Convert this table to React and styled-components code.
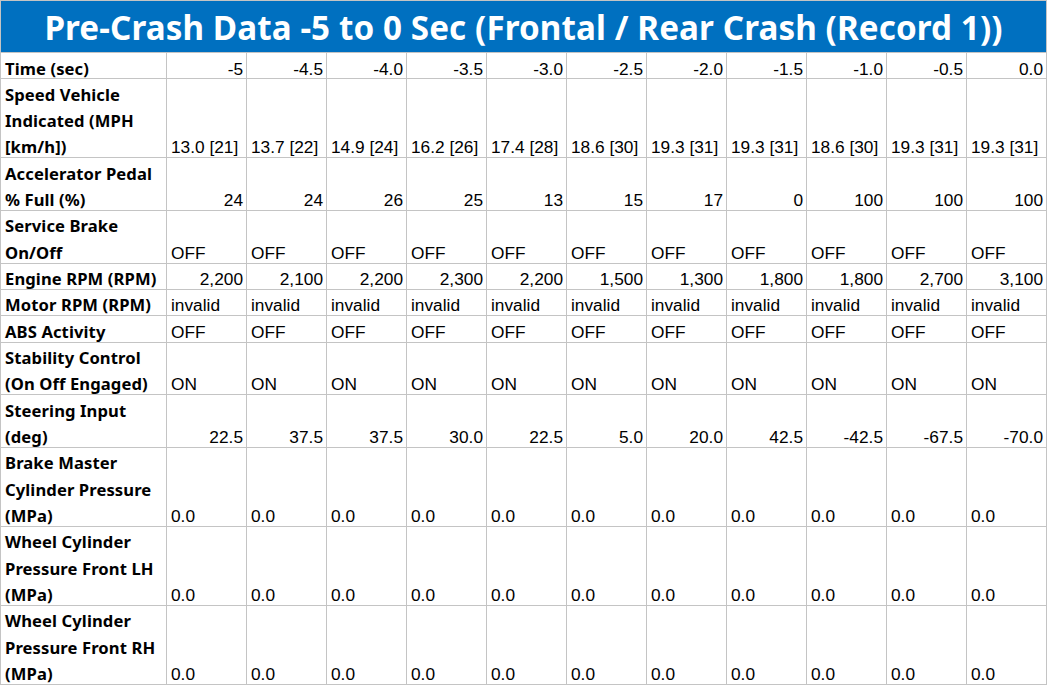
import React from "react";
import styled, { createGlobalStyle } from "styled-components";

const Global = createGlobalStyle`
  html, body { margin: 0; padding: 0; background: #ffffff; }
  body { font-family: "Liberation Sans", Arial, sans-serif; color: #000; }
`;

const LINE = 26.33;
const GRID = "#c4c4c4";

const Sheet = styled.div`
  width: 1047px;
  box-sizing: border-box;
  border-left: 1px solid ${GRID};
`;

const TitleBar = styled.div`
  height: 52px;
  box-sizing: border-box;
  border-top: 1px solid ${GRID};
  border-right: 1px solid ${GRID};
  background: #0070c0;
  color: #ffffff;
  display: flex;
  align-items: center;
  justify-content: center;
  font-family: "Noto Sans", "Open Sans", sans-serif;
  font-weight: 700;
  font-size: 33.2px;
  letter-spacing: 0.1px;
  padding-top: 1px;
`;

const Grid = styled.div`
  display: grid;
  grid-template-columns: 166px repeat(11, 80px);
  border-top: 1px solid ${GRID};
`;

const Cell = styled.div`
  box-sizing: border-box;
  height: ${(p) => p.$lines * LINE}px;
  border-right: 1px solid ${GRID};
  border-bottom: 1px solid ${GRID};
  display: flex;
  align-items: flex-end;
  justify-content: ${(p) => (p.$right ? "flex-end" : "flex-start")};
  padding: 0 3px 0 4px;
  font-family: "Liberation Sans", Arial, sans-serif;
  font-size: 17.3px;
  white-space: nowrap;
`;

const Label = styled(Cell)`
  font-family: "Noto Sans", "Open Sans", sans-serif;
  font-weight: 700;
  font-size: 16.6px;
  letter-spacing: 0.1px;
  white-space: normal;
`;

const Text = styled.div`
  line-height: ${LINE}px;
  margin-bottom: -3.5px;
`;

const rows = [
  { label: ["Time (sec)"], right: true, values: ["-5", "-4.5", "-4.0", "-3.5", "-3.0", "-2.5", "-2.0", "-1.5", "-1.0", "-0.5", "0.0"] },
  { label: ["Speed Vehicle", "Indicated (MPH", "[km/h])"], values: ["13.0 [21]", "13.7 [22]", "14.9 [24]", "16.2 [26]", "17.4 [28]", "18.6 [30]", "19.3 [31]", "19.3 [31]", "18.6 [30]", "19.3 [31]", "19.3 [31]"] },
  { label: ["Accelerator Pedal", "% Full (%)"], right: true, values: ["24", "24", "26", "25", "13", "15", "17", "0", "100", "100", "100"] },
  { label: ["Service Brake", "On/Off"], values: Array(11).fill("OFF") },
  { label: ["Engine RPM (RPM)"], right: true, values: ["2,200", "2,100", "2,200", "2,300", "2,200", "1,500", "1,300", "1,800", "1,800", "2,700", "3,100"] },
  { label: ["Motor RPM (RPM)"], values: Array(11).fill("invalid") },
  { label: ["ABS Activity"], values: Array(11).fill("OFF") },
  { label: ["Stability Control", "(On Off Engaged)"], values: Array(11).fill("ON") },
  { label: ["Steering Input", "(deg)"], right: true, values: ["22.5", "37.5", "37.5", "30.0", "22.5", "5.0", "20.0", "42.5", "-42.5", "-67.5", "-70.0"] },
  { label: ["Brake Master", "Cylinder Pressure", "(MPa)"], values: Array(11).fill("0.0") },
  { label: ["Wheel Cylinder", "Pressure Front LH", "(MPa)"], values: Array(11).fill("0.0") },
  { label: ["Wheel Cylinder", "Pressure Front RH", "(MPa)"], values: Array(11).fill("0.0") },
];

export default function App() {
  return (
    <>
      <Global />
      <Sheet>
        <TitleBar>Pre-Crash Data -5 to 0 Sec (Frontal / Rear Crash (Record 1))</TitleBar>
        <Grid>
          {rows.map((r, i) => (
            <React.Fragment key={i}>
              <Label $lines={r.label.length}>
                <Text>
                  {r.label.map((l, j) => (
                    <div key={j}>{l}</div>
                  ))}
                </Text>
              </Label>
              {r.values.map((v, j) => (
                <Cell key={j} $lines={r.label.length} $right={r.right}>
                  <Text>{v}</Text>
                </Cell>
              ))}
            </React.Fragment>
          ))}
        </Grid>
      </Sheet>
    </>
  );
}
